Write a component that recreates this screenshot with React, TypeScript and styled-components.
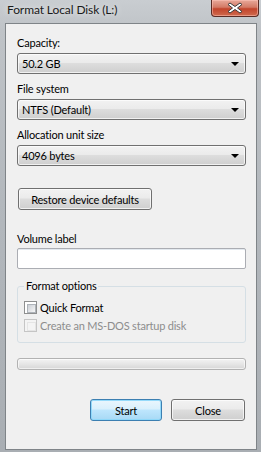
import React from 'react';
import styled, { createGlobalStyle } from 'styled-components';

const GlobalStyle = createGlobalStyle`
  html, body {
    margin: 0;
    padding: 0;
    background: #b9bdc1;
  }
  * {
    box-sizing: border-box;
  }
`;

const font = `Lato, "Noto Sans", Arial, sans-serif`;

const Window = styled.div`
  width: 261px;
  height: 452px;
  display: flex;
  flex-direction: column;
  background: linear-gradient(180deg, #c9cdd1 0px, #bfc3c7 30px, #b3b8bd 200px, #a9aeb3 452px);
  font-family: ${font};
  font-size: 11px;
  letter-spacing: -0.2px;
  color: #000;
`;

const TitleBar = styled.div`
  height: 23px;
  display: flex;
  justify-content: space-between;
  align-items: flex-start;
  padding-left: 7px;
  padding-right: 2px;
`;

const Title = styled.div`
  margin-top: 2px;
  font-size: 12px;
  letter-spacing: -0.1px;
  line-height: 16px;
  color: #1a1a1a;
  text-shadow: 0 0 6px rgba(255, 255, 255, 0.9);
`;

const CloseButton = styled.div`
  width: 48px;
  height: 17px;
  border: 1px solid #5a2b24;
  border-top: none;
  border-radius: 0 0 4px 4px;
  background: linear-gradient(180deg, #e8a99a 0%, #d37a66 45%, #c2442c 55%, #cf6a4d 100%);
  box-shadow: inset 0 0 0 1px rgba(255, 200, 190, 0.5);
  display: flex;
  align-items: center;
  justify-content: center;
`;

const Client = styled.div`
  flex: 1;
  margin: 0 4px 2px 5px;
  border: 1px solid #7f8488;
  background: #f0f0f0;
  padding: 11px 10px 0 11px;
  display: flex;
  flex-direction: column;
`;

const Label = styled.div<{ $gap?: number }>`
  line-height: 15px;
  height: 15px;
  margin-top: ${(p) => p.$gap ?? 0}px;
  white-space: nowrap;
`;

const Combo = styled.div`
  margin-top: 3px;
  height: 21px;
  border: 1px solid #707070;
  border-radius: 3px;
  background: linear-gradient(180deg, #f2f2f2 0%, #ebebeb 45%, #dddddd 50%, #cfcfcf 100%);
  box-shadow: inset 0 0 0 1px rgba(255, 255, 255, 0.7);
  display: flex;
  align-items: center;
  justify-content: space-between;
  padding: 0 5px 0 4px;
`;

const ComboText = styled.span`
  line-height: 15px;
`;

const Arrow = styled.span`
  width: 0;
  height: 0;
  border-left: 4px solid transparent;
  border-right: 4px solid transparent;
  border-top: 4px solid #000;
  margin-right: 1px;
`;

const PushButton = styled.button<{ $default?: boolean; $w: number }>`
  width: ${(p) => p.$w}px;
  height: 22px;
  padding: 0;
  font-family: ${font};
  font-size: 11px;
  letter-spacing: -0.2px;
  color: #000;
  white-space: nowrap;
  border: 1px solid ${(p) => (p.$default ? '#3c7fb1' : '#707070')};
  border-radius: 3px;
  background: ${(p) =>
    p.$default
      ? 'linear-gradient(180deg, #eaf6fd 0%, #d9f0fc 45%, #bee6fd 50%, #a7d9f5 100%)'
      : 'linear-gradient(180deg, #f2f2f2 0%, #ebebeb 45%, #dddddd 50%, #cfcfcf 100%)'};
  box-shadow: inset 0 0 0 1px ${(p) => (p.$default ? 'rgba(140, 215, 250, 0.9)' : 'rgba(255, 255, 255, 0.7)')};
`;

const RestoreRow = styled.div`
  margin-top: 22px;
  padding-left: 1px;
`;

const TextInput = styled.div`
  margin-top: 2px;
  height: 21px;
  border: 1px solid #abadb3;
  border-radius: 2px;
  background: #fff;
  box-shadow: inset 0 1px 0 #e3e9ef;
`;

const GroupBox = styled.div`
  position: relative;
  margin-top: 17px;
  height: 57px;
  padding: 14px 0 0 6px;
  border: 1px solid #d5dfe5;
  border-radius: 3px;
  display: flex;
  flex-direction: column;
  gap: 5px;
`;

const Legend = styled.span`
  position: absolute;
  top: -8px;
  left: 6px;
  padding: 0 2px;
  line-height: 14px;
  background: #f0f0f0;
`;

const CheckRow = styled.div<{ $disabled?: boolean }>`
  display: flex;
  align-items: center;
  gap: 3px;
  height: 13px;
  line-height: 13px;
  color: ${(p) => (p.$disabled ? '#8d8d8d' : '#000')};
  white-space: nowrap;
`;

const CheckBox = styled.span<{ $disabled?: boolean }>`
  flex: none;
  width: 13px;
  height: 13px;
  border: 1px solid ${(p) => (p.$disabled ? '#c5c5c5' : '#8e8f8f')};
  background: ${(p) => (p.$disabled ? '#f4f4f4' : '#fff')};
  padding: 2px;
  &::after {
    content: '';
    display: block;
    width: 7px;
    height: 7px;
    background: ${(p) =>
      p.$disabled ? '#f4f4f4' : 'linear-gradient(135deg, #cbcfd5 0%, #f6f6f6 100%)'};
    border: 1px solid ${(p) => (p.$disabled ? '#e5e5e5' : '#aeb3b9')};
  }
`;

const Progress = styled.div`
  margin-top: 15px;
  height: 12px;
  border: 1px solid #b2b2b2;
  border-radius: 3px;
  background: linear-gradient(180deg, #f3f3f3 0%, #e6e6e6 50%, #d6d6d6 100%);
  box-shadow: inset 0 0 0 1px rgba(255, 255, 255, 0.6);
`;

const ButtonRow = styled.div`
  margin-top: 29px;
  display: flex;
  justify-content: flex-end;
  gap: 9px;
  padding-right: 1px;
`;

const CloseGlyph = () => (
  <svg width="16" height="12" viewBox="0 0 16 12">
    <path
      d="M3 1 L8 4.5 L13 1 L15 2.5 L10.5 6 L15 9.5 L13 11 L8 7.5 L3 11 L1 9.5 L5.5 6 L1 2.5 Z"
      fill="#ffffff"
      stroke="#3b3b3b"
      strokeWidth="1"
      strokeLinejoin="round"
    />
  </svg>
);

const Field: React.FC<{ label: string; value: string; gap?: number }> = ({ label, value, gap }) => (
  <>
    <Label $gap={gap}>{label}</Label>
    <Combo>
      <ComboText>{value}</ComboText>
      <Arrow />
    </Combo>
  </>
);

export default function App() {
  return (
    <>
      <GlobalStyle />
      <Window>
        <TitleBar>
          <Title>Format Local Disk (L:)</Title>
          <CloseButton>
            <CloseGlyph />
          </CloseButton>
        </TitleBar>
        <Client>
          <Field label="Capacity:" value="50.2 GB" />
          <Field label="File system" value="NTFS (Default)" gap={7} />
          <Field label="Allocation unit size" value="4096 bytes" gap={7} />
          <RestoreRow>
            <PushButton $w={134}>Restore device defaults</PushButton>
          </RestoreRow>
          <Label $gap={21}>Volume label</Label>
          <TextInput />
          <GroupBox>
            <Legend>Format options</Legend>
            <CheckRow>
              <CheckBox />
              Quick Format
            </CheckRow>
            <CheckRow $disabled>
              <CheckBox $disabled />
              Create an MS-DOS startup disk
            </CheckRow>
          </GroupBox>
          <Progress />
          <ButtonRow>
            <PushButton $w={72} $default>
              Start
            </PushButton>
            <PushButton $w={74}>Close</PushButton>
          </ButtonRow>
        </Client>
      </Window>
    </>
  );
}
